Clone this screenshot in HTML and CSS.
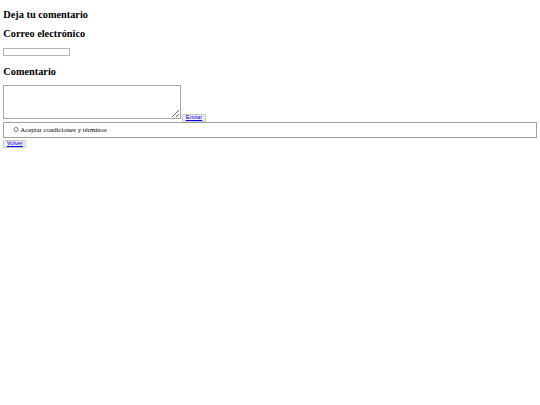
FILE: index.html
```html
<!DOCTYPE html>
<html lang="es">
<head>
<meta charset="utf-8">
<title>Deja tu comentario</title>
<link rel="stylesheet" href="styles.css">
</head>
<body>
<h3 class="title first">Deja tu comentario</h3>
<form class="form">
<h3 class="title">Correo electrónico</h3>
<input class="field" type="email">
<h3 class="title after-field">Comentario</h3>
<div class="row">
<textarea class="area"></textarea>
<button class="btn" type="button"><a class="link" href="#">Enviar</a></button>
</div>
<fieldset class="terms">
<input class="radio" type="radio" id="acepto"><label class="label" for="acepto">Aceptar condiciones y términos</label>
</fieldset>
<button class="btn" type="button"><a class="link" href="#">Volver</a></button>
</form>
</body>
</html>
```
FILE: styles.css
```css
html { background: #fff; }
body {
  margin: 0;
  padding: 8.6px 3.3px 0;
  font-family: "Liberation Serif", "Times New Roman", serif;
  font-size: 6.8px;
  color: #000;
}
.form { margin: 0; }
.title {
  font-size: 10.3px;
  font-weight: bold;
  margin: 7.7px 0;
  line-height: 11.8px;
}
.first { margin-top: 0; }
.after-field { margin-top: 9.7px; }
.field {
  display: block;
  box-sizing: border-box;
  width: 67px;
  height: 8.5px;
  margin: 0;
  padding: 0;
  border: 1px solid #b5b5b5;
  background: #fff;
}
.row {
  display: flex;
  align-items: flex-end;
  gap: 1px;
}
.area {
  box-sizing: border-box;
  width: 178px;
  height: 34px;
  margin: 0 0 3px 0;
  padding: 1px;
  border: 1px solid #a9a9a9;
  background: #fff;
}
.btn {
  box-sizing: border-box;
  font-family: "Liberation Sans", Arial, sans-serif;
  font-size: 5.8px;
  line-height: 1;
  padding: 0 2.5px;
  margin: 0;
  border: 1px solid #c8c8c8;
  border-radius: 1px;
  background: #efefef;
  height: 8px;
}
.link { color: #0000ee; text-decoration: underline; }
.terms {
  margin: 0 0 1.5px;
  padding: 2.5px 5.7px 3px;
  border: 1px solid #a0a0a0;
  min-width: 0;
  line-height: 8px;
}
.radio {
  width: 5.5px;
  height: 5.5px;
  margin: 0 1.5px 0 3.3px;
  vertical-align: -0.5px;
}
.label { font-size: 6.8px; }
```
